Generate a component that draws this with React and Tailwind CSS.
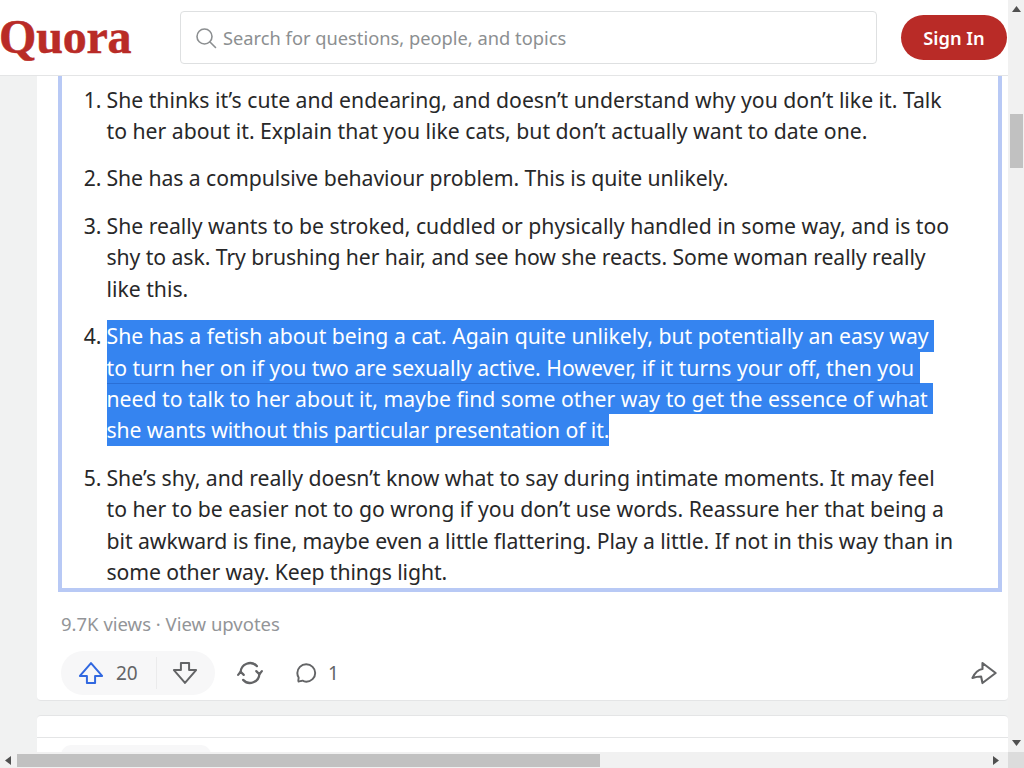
const body = '[font-family:"Noto_Sans",sans-serif]'

// second value nudges a line's width to line up with the reference wrapping
const items = [
  { n: '1.', lines: [['She thinks it’s cute and endearing, and doesn’t understand why you don’t like it. Talk'], ['to her about it. Explain that you like cats, but don’t actually want to date one.']] },
  { n: '2.', lines: [['She has a compulsive behaviour problem. This is quite unlikely.', 'tracking-[-0.06px]']] },
  { n: '3.', lines: [['She really wants to be stroked, cuddled or physically handled in some way, and is too'], ['shy to ask. Try brushing her hair, and see how she reacts. Some woman really really', 'tracking-[-0.07px]'], ['like this.']] },
  { n: '4.', selected: true, lines: [['She has a fetish about being a cat. Again quite unlikely, but potentially an easy way '], ['to turn her on if you two are sexually active. However, if it turns your off, then you ', 'relative z-10 shadow-[0_1px_0_#2a6fd6]'], ['need to talk to her about it, maybe find some other way to get the essence of what '], ['she wants without this particular presentation of it.', 'tracking-[-0.1px]']] },
  { n: '5.', lines: [['She’s shy, and really doesn’t know what to say during intimate moments. It may feel', 'tracking-[-0.025px]'], ['to her to be easier not to go wrong if you don’t use words. Reassure her that being a'], ['bit awkward is fine, maybe even a little flattering. Play a little. If not in this way than in', 'tracking-[-0.05px]'], ['some other way. Keep things light.', 'tracking-[-0.09px]']] },
]

function ListItem({ item }) {
  return (
    <li className="flex mb-4 last:mb-0">
      <span className="w-[44.5px] shrink-0 pr-[5px] text-right">{item.n}</span>
      <div>
        {item.lines.map(([line, cls]) => (
          <div key={line} className="h-[31.44px] whitespace-pre">
            <span className={`${item.selected ? 'inline-block h-[31.44px] bg-[#3584f0] text-white' : ''} ${cls || ''}`}>{line}</span>
          </div>
        ))}
      </div>
    </li>
  )
}

function Header() {
  return (
    <header className="h-[76px] shrink-0 bg-white border-b border-[#e4e5e6] flex items-center pr-[1px]">
      <div className="w-[181px] shrink-0 -ml-px text-[48px] leading-none font-bold text-[#b92b27] tracking-[-0.2px] [-webkit-text-stroke:0.5px_#b92b27] [font-family:'Liberation_Serif',serif] pb-[2px]">Quora</div>
      <div className="flex-1 h-[53px] border border-[#dee0e1] rounded-[4px] flex items-center pl-[13px] gap-[5px]">
        <svg width="24" height="24" viewBox="0 0 24 24" fill="none" stroke="#8c8f91" strokeWidth="1.6" strokeLinecap="round">
          <circle cx="10.5" cy="10.5" r="7.500" />
          <path d="m16 16 5.500 5.500" />
        </svg>
        <span className="text-[18.3px] text-[#8c8f91]">Search for questions, people, and topics</span>
      </div>
      <button className="ml-[24px] w-[106px] h-[45px] rounded-full bg-[#b92b27] text-white text-[18.3px] font-semibold">Sign In</button>
    </header>
  )
}

function Actions() {
  return (
    <div className="flex items-center h-[44px] mt-[12px] ml-[24px] mr-[10px] text-[#636466]">
      <div className="flex items-center h-[44px] w-[154px] rounded-full bg-[#f7f7f8]">
        <svg className="ml-[16px]" width="28" height="28" viewBox="0 0 24 24" fill="none" stroke="#3168e0" strokeWidth="1.7" strokeLinejoin="round">
          <path d="M12 3.500 2.500 14.500H8.500V20.500H15.500V14.500H21.500Z" />
        </svg>
        <span className="ml-[11px] text-[19px] w-[32px]">20</span>
        <div className="ml-[8px] w-px h-[32px] bg-[#ebebec]" />
        <svg className="ml-[14px]" width="28" height="28" viewBox="0 0 24 24" fill="none" stroke="#636466" strokeWidth="1.7" strokeLinejoin="round">
          <path d="M12 20.500 2.500 9.500H8.500V3.500H15.500V9.500H21.500Z" />
        </svg>
      </div>
      <svg className="ml-[20px]" width="30" height="30" viewBox="0 0 24 24" fill="none" stroke="#636466" strokeWidth="1.8" strokeLinecap="round" strokeLinejoin="round">
        <path d="M19.500 12.500a7.500 7.500 0 0 1-13 5" />
        <path d="M4.500 11.500a7.500 7.500 0 0 1 13-5" />
        <path d="M2.500 13.500 4.500 11l2.500 2.500" />
        <path d="M21.500 10.500 19.500 13 17 10.500" />
      </svg>
      <svg className="ml-[28px]" width="26" height="26" viewBox="0 0 24 24" fill="none" stroke="#636466" strokeWidth="1.8" strokeLinejoin="round">
        <path d="M12.200 20c4.600 0 8.300-3.500 8.300-8s-3.700-8-8.300-8-8.200 3.500-8.200 8c0 1.500.4 2.900 1.200 4.100.3.500-.8 3.400-.2 3.800.5.400 3.100-1.200 3.800-.8 1 .6 2.200.9 3.400.9Z" />
      </svg>
      <span className="ml-[9px] text-[19px]">1</span>
      <svg className="ml-auto" width="28" height="28" viewBox="0 0 24 24" fill="none" stroke="#636466" strokeWidth="1.8" strokeLinejoin="round">
        <path d="M10.700 3.400 22 12 10.700 20.600 9.500 15C7 15 4.500 15.500 2.100 16.300 4 12 7 9 10.700 8.500Z" />
      </svg>
    </div>
  )
}

function VScrollbar() {
  return (
    <div className="w-[16px] shrink-0 bg-[#f1f1f1] flex flex-col items-center">
      <svg className="mt-[6px]" width="9" height="6" viewBox="0 0 9 6"><path d="M4.500 0 9 6H0Z" fill="#505050" /></svg>
      <div className="w-[13px] h-[54px] mt-[102px] bg-[#c1c1c1]" />
      <svg className="mt-auto mb-[6px]" width="9" height="6" viewBox="0 0 9 6"><path d="M4.500 6 9 0H0Z" fill="#505050" /></svg>
    </div>
  )
}

function HScrollbar() {
  return (
    <div className="h-[16px] shrink-0 bg-[#f1f1f1] flex items-center">
      <svg className="ml-[5px]" width="6" height="9" viewBox="0 0 6 9"><path d="M0 4.500 6 0V9Z" fill="#505050" /></svg>
      <div className="ml-[6px] w-[583px] h-[13px] bg-[#c1c1c1]" />
      <svg className="ml-[393px]" width="6" height="9" viewBox="0 0 6 9"><path d="M6 4.500 0 0V9Z" fill="#505050" /></svg>
      <div className="ml-auto w-[16px] h-[16px] bg-[#dcdcdc]" />
    </div>
  )
}

export default function App() {
  return (
    <div className={`h-screen w-full overflow-hidden flex flex-col bg-[#f1f2f2] ${body}`}>
      <div className="flex-1 min-h-0 flex">
        <div className="flex-1 min-w-0 flex flex-col overflow-hidden">
          <Header />
          <main className="flex-1 min-h-0 overflow-hidden pl-[37px]">
            <section className="bg-white h-[625px] border-b border-[#e4e5e6] rounded-b-[4px]">
              <div className="ml-[21px] mr-[6px] h-[516px] border-x-4 border-b-4 border-[#b8c9f5] pt-[7.5px] text-[21.2px] leading-[31.44px] text-[#282829]">
                <ol>
                  {items.map((item) => <ListItem key={item.n} item={item} />)}
                </ol>
              </div>
              <div className="mt-[17px] ml-[24px] text-[18.5px] leading-[30px] text-[#939598]">9.7K views · View upvotes</div>
              <Actions />
            </section>
            <section className="mt-[14px] bg-white border-t border-[#e4e5e6] rounded-t-[4px] h-[40px]">
              <div className="h-[22px] border-b border-[#e4e5e6]" />
              <div className="ml-[24px] mt-[7px] w-[150px] h-[10px] rounded-t-full bg-[#f7f7f8]" />
            </section>
          </main>
        </div>
        <VScrollbar />
      </div>
      <HScrollbar />
    </div>
  )
}
